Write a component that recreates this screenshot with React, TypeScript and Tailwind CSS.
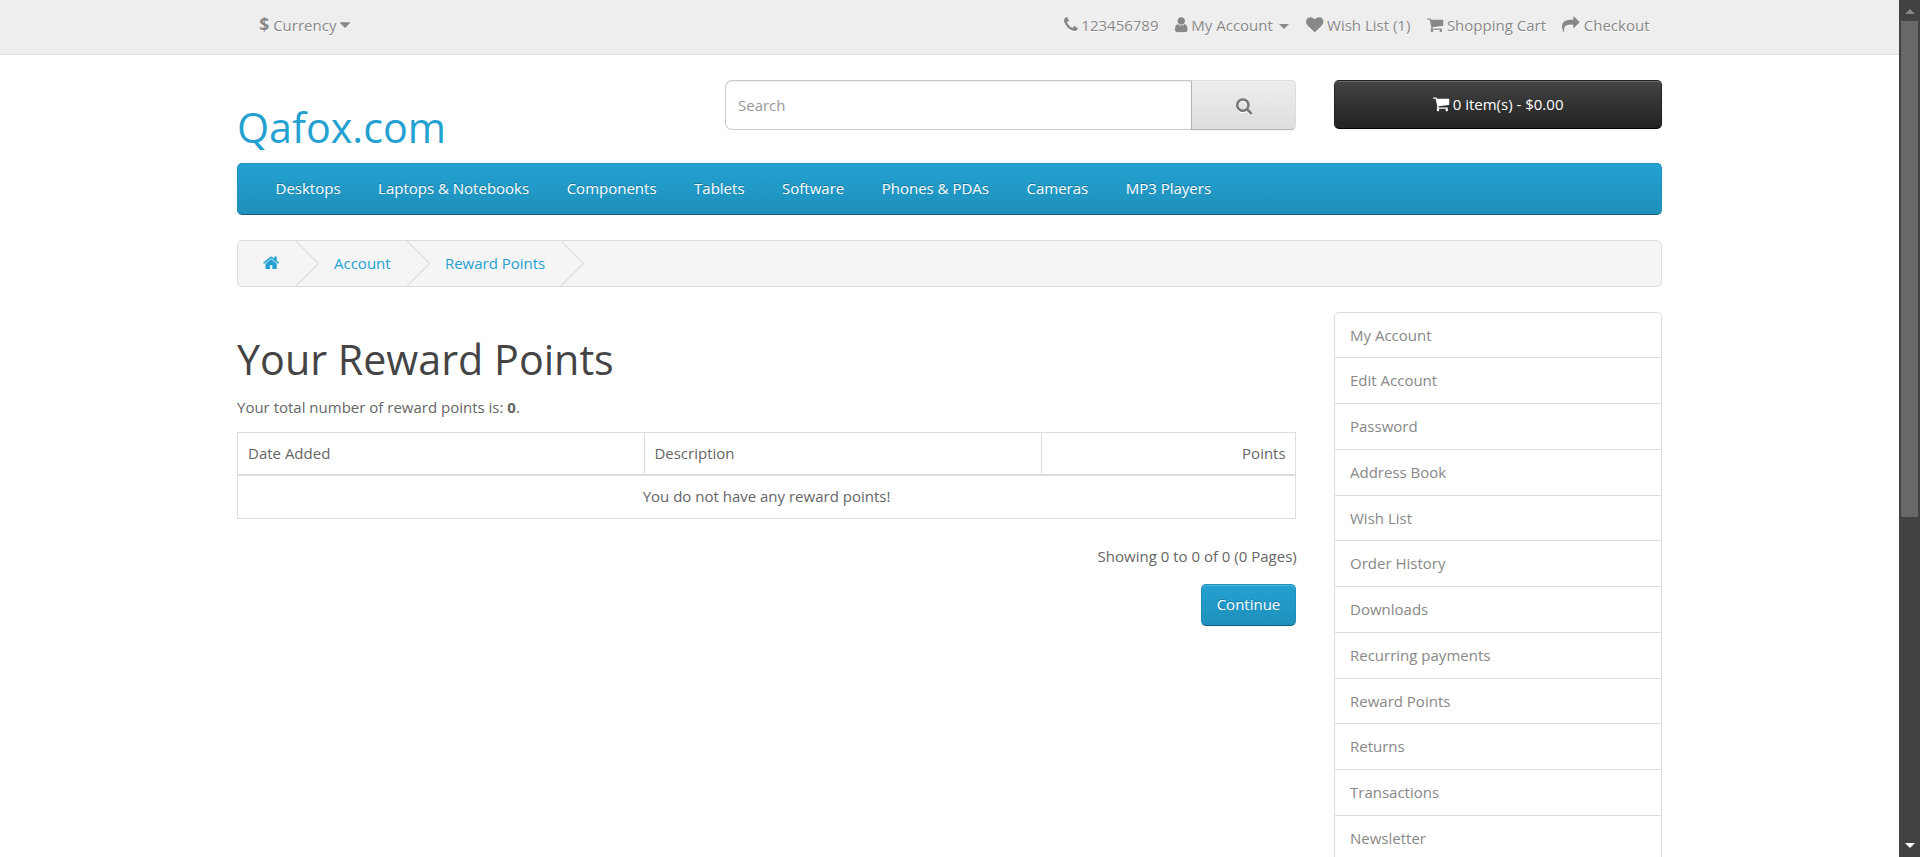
import type { ReactNode } from "react";

type IconShape = { x: number; w: number; d: string };

const ICONS = {
  phone: {
    x: 192,
    w: 1408,
    d: "M1600 1240q0 27-10 70.5t-21 68.5q-21 50-122 106-94 51-186 51-27 0-53-3.5t-57-12.5-47-14.5-55.5-20.5-49.5-18q-98-35-175-83-127-79-264-216t-216-264q-48-77-83-175-3-9-18-49.5t-20.5-55.5-14.5-47-12.5-57-3.5-53q0-92 51-186 56-101 106-122 25-11 68.5-21t70.5-10q14 0 21 3 18 6 53 76 11 19 30 54t35 63.5 31 53.5q3 4 17.5 25t21.5 35.5 7 28.5q0 20-28.5 50t-62 55-62 53-28.5 46q0 9 5 22.5t8.5 20.5 14 24 11.5 19q76 137 174 235t235 174q2 1 19 11.5t24 14 20.5 8.5 22.5 5q18 0 46-28.5t53-62 55-62 50-28.5q14 0 28.5 7t35.5 21.5 25 17.5q25 15 53.5 31t63.5 35 54 30q70 35 76 53 3 7 3 21z",
  },
  user: {
    x: 256,
    w: 1280,
    d: "M1536 1399q0 109-62.5 187t-150.5 78h-854q-88 0-150.5-78t-62.5-187q0-85 8.5-160.5t31.5-152 58.5-131 94-89 134.5-34.5q131 128 313 128t313-128q76 0 134.5 34.5t94 89 58.5 131 31.5 152 8.5 160.5zm-256-887q0 159-112.5 271.5t-271.5 112.5-271.5-112.5-112.5-271.5 112.5-271.5 271.5-112.5 271.5 112.5 112.5 271.5z",
  },
  heart: {
    x: 0,
    w: 1792,
    d: "M896 1664q-26 0-44-18l-624-602q-10-8-27.5-26t-55.5-65.5-68-97.5-53.5-121-23.5-138q0-220 127-344t351-124q62 0 126.5 21.5t120 58 95.5 68.5 76 68q36-36 76-68t95.5-68.5 120-58 126.5-21.5q224 0 351 124t127 344q0 221-229 450l-623 600q-18 18-44 18z",
  },
  cart: {
    x: 64,
    w: 1664,
    d: "M704 1536q0 52-38 90t-90 38-90-38-38-90 38-90 90-38 90 38 38 90zm896 0q0 52-38 90t-90 38-90-38-38-90 38-90 90-38 90 38 38 90zm128-1088v512q0 24-16.5 42.5t-40.5 21.5l-1044 122q13 60 13 70 0 16-24 64h920q26 0 45 19t19 45-19 45-45 19h-1024q-26 0-45-19t-19-45q0-11 8-31.5t16-36 21.5-40 15.5-29.5l-177-823h-204q-26 0-45-19t-19-45 19-45 45-19h256q16 0 28.5 6.5t19.5 15.5 13 24.5 8 26 5.5 29.5 4.5 26h1201q26 0 45 19t19 45z",
  },
  share: {
    x: 0,
    w: 1792,
    d: "M1792 640q0 26-19 45l-512 512q-19 19-45 19t-45-19-19-45v-256h-224q-98 0-175.5 6t-154 21.5-133 42.5-105.5 69.5-80 101-48.5 138.5-17.5 181q0 55 5 123 0 6 2.5 23.5t2.5 26.5q0 15-8.5 25t-23.5 10q-16 0-28-17-7-9-13-22t-13.5-30-10.5-24q-127-285-127-451 0-199 53-333 162-403 875-403h224v-256q0-26 19-45t45-19 45 19l512 512q19 19 19 45z",
  },
  home: {
    x: 64,
    w: 1664,
    d: "M1472 992v480q0 26-19 45t-45 19h-384v-384h-256v384h-384q-26 0-45-19t-19-45v-480q0-1 .5-3t.5-3l575-474 575 474q1 2 1 6zm223-69l-62 74q-8 9-21 11h-3q-13 0-21-7l-692-577-692 577q-12 8-24 7-13-2-21-11l-62-74q-8-10-7-23.5t11-21.5l719-599q32-26 76-26t76 26l244 204v-195q0-14 9-23t23-9h192q14 0 23 9t9 23v408l219 182q10 8 11 21.5t-7 23.5z",
  },
  search: {
    x: 64,
    w: 1664,
    d: "M1216 832q0-185-131.5-316.5t-316.5-131.5-316.5 131.5-131.5 316.5 131.5 316.5 316.5 131.5 316.5-131.5 131.5-316.5zm512 832q0 52-38 90t-90 38q-54 0-90-38l-343-342q-179 124-399 124-143 0-273.5-55.5t-225-150-150-225-55.5-273.5 55.5-273.5 150-225 225-150 273.5-55.5 273.5 55.5 225 150 150 225 55.5 273.5q0 220-124 399l343 343q37 37 37 90z",
  },
  caret: {
    x: 384,
    w: 1024,
    d: "M1408 704q0 26-19 45l-448 448q-19 19-45 19t-45-19l-448-448q-19-19-19-45t19-45 45-19h896q26 0 45 19t19 45z",
  },
} satisfies Record<string, IconShape>;

function Icon({ name, className = "" }: { name: keyof typeof ICONS; className?: string }) {
  const { x, w, d } = ICONS[name];
  return (
    <svg
      viewBox={`${x} 0 ${w} 1792`}
      className={`inline-block h-[17.5px] w-auto overflow-visible fill-current align-[-2.5px] ${className}`}
      aria-hidden="true"
    >
      <path d={d} />
    </svg>
  );
}

const MENU = [
  "Desktops",
  "Laptops & Notebooks",
  "Components",
  "Tablets",
  "Software",
  "Phones & PDAs",
  "Cameras",
  "MP3 Players",
];

const ACCOUNT_LINKS = [
  "My Account",
  "Edit Account",
  "Password",
  "Address Book",
  "Wish List",
  "Order History",
  "Downloads",
  "Recurring payments",
  "Reward Points",
  "Returns",
  "Transactions",
  "Newsletter",
];

const WHITE_SHADOW = "drop-shadow-[0_1px_0_#fff]";

function TopBar() {
  return (
    <nav className="h-[55px] border-b border-[#e2e2e2] bg-[#eeeeee] text-[#888888] [text-shadow:0_1px_0_#fff]">
      <div className="mx-auto flex w-[1425px] justify-between pt-[12.5px] pr-[12.5px] pl-[22.25px] whitespace-nowrap">
        <div>
          <strong className="text-[17.5px] leading-none font-bold">$</strong> Currency{" "}
          <Icon name="caret" className={WHITE_SHADOW} />
        </div>
        <ul className="flex gap-[16.4px]">
          <li>
            <Icon name="phone" className={WHITE_SHADOW} /> 123456789
          </li>
          <li>
            <Icon name="user" className={WHITE_SHADOW} /> My Account{" "}
            <span className="ml-[2.5px] inline-block border-x-[5px] border-t-[5px] border-x-transparent border-t-[#888888] align-middle" />
          </li>
          <li>
            <Icon name="heart" className={WHITE_SHADOW} /> Wish List (1)
          </li>
          <li>
            <Icon name="cart" className={WHITE_SHADOW} /> Shopping Cart
          </li>
          <li>
            <Icon name="share" className={WHITE_SHADOW} /> Checkout
          </li>
        </ul>
      </div>
    </nav>
  );
}

function Header() {
  return (
    <header className="mt-[25px] flex h-[83px] items-start">
      <div className="w-[488px] pt-[25px] text-[41.25px] leading-[45px] text-[#23a1d1]">Qafox.com</div>
      <div className="flex h-[50px] w-[571px]">
        <div className="flex flex-1 items-center rounded-l-[7px] border border-r-0 border-[#cccccc] bg-white pl-[12px] text-[#999999] shadow-[inset_0_1px_1px_rgba(0,0,0,0.075)]">
          Search
        </div>
        <button className="flex w-[105px] items-center justify-center rounded-r-[5px] border border-[#dddddd] border-b-[#b3b3b3] border-l-[#b3b3b3] bg-linear-to-b from-[#eeeeee] to-[#dddddd] pt-px pl-px text-[#777777] shadow-[0_1px_2px_rgba(0,0,0,0.05)]">
          <Icon name="search" className={WHITE_SHADOW} />
        </button>
      </div>
      <button className="ml-auto h-[49px] w-[328px] rounded-[5px] border border-[#222222] border-b-black bg-linear-to-b from-[#444444] to-[#222222] text-white shadow-[inset_0_1px_0_rgba(255,255,255,0.2),0_1px_2px_rgba(0,0,0,0.05)]">
        <Icon name="cart" /> 0 item(s) - $0.00
      </button>
    </header>
  );
}

function Menu() {
  return (
    <nav className="flex h-[52px] items-center rounded-[5px] border border-[#1f90bb] border-b-[#145e7a] bg-linear-to-b from-[#23a1d1] to-[#1f90bb] pb-[2px] pl-[18.75px] text-white [text-shadow:0_-1px_0_rgba(0,0,0,0.25)]">
      {MENU.map((item) => (
        <a key={item} className="px-[18.75px]">
          {item}
        </a>
      ))}
    </nav>
  );
}

function Crumb({ children }: { children: ReactNode }) {
  return (
    <li className="flex items-center">
      <span className="pr-[16px] pl-[15.25px]">{children}</span>
      <svg className="h-[45px] w-[23px]" viewBox="0 0 23 45" fill="none" stroke="#dddddd" strokeWidth="1.25" aria-hidden="true">
        <path d="M0 0L22.5 22.5L0 45" />
      </svg>
    </li>
  );
}

function Breadcrumb() {
  return (
    <ul className="mt-[25px] flex h-[47px] overflow-hidden rounded-[5px] border border-[#dddddd] bg-[#f5f5f5] pl-[9.5px] text-[#23a1d1]">
      <Crumb>
        <Icon name="home" className={`mr-[0.75px] ${WHITE_SHADOW}`} />
      </Crumb>
      <Crumb>Account</Crumb>
      <Crumb>Reward Points</Crumb>
    </ul>
  );
}

function Content() {
  return (
    <main className="w-[1059px]">
      <h1 className="mt-[25px] text-[41.25px] leading-[45px] text-[#444444]">Your Reward Points</h1>
      <p className="mt-[12.5px]">
        Your total number of reward points is: <b className="font-bold">0</b>.
      </p>
      <table className="mt-[12px] w-full table-fixed border-collapse border border-[#dddddd]">
        <colgroup>
          <col className="w-[407px]" />
          <col className="w-[397px]" />
          <col />
        </colgroup>
        <thead>
          <tr className="h-[43px]">
            <td className="border border-b-2 border-[#dddddd] px-[10px] text-left">Date Added</td>
            <td className="border border-b-2 border-[#dddddd] px-[9.4px] text-left">Description</td>
            <td className="border border-b-2 border-[#dddddd] px-[9.4px] text-right">Points</td>
          </tr>
        </thead>
        <tbody>
          <tr className="h-[43px]">
            <td colSpan={3} className="border border-[#dddddd] text-center">
              You do not have any reward points!
            </td>
          </tr>
        </tbody>
      </table>
      <div className="mt-[25px] -mr-[0.75px] text-right">Showing 0 to 0 of 0 (0 Pages)</div>
      <div className="mt-[15px] flex justify-end">
        <button className="h-[42px] w-[95px] rounded-[5px] border border-[#1f90bb] border-b-[#145e7a] bg-linear-to-b from-[#23a1d1] to-[#1f90bb] text-white shadow-[inset_0_1px_0_rgba(255,255,255,0.2),0_1px_2px_rgba(0,0,0,0.05)] [text-shadow:0_-1px_0_rgba(0,0,0,0.25)]">
          Continue
        </button>
      </div>
    </main>
  );
}

function Sidebar() {
  return (
    <aside className="-mt-[0.4px] w-[328px]">
      <ul className="rounded-t-[5px] border border-[#dddddd] text-[#888888]">
        {ACCOUNT_LINKS.map((link) => (
          <li key={link} className="flex h-[45.75px] items-center border-b border-[#dddddd] pt-[0.25px] pl-[15px]">
            {link}
          </li>
        ))}
      </ul>
    </aside>
  );
}

function Scrollbar() {
  return (
    <div className="flex h-full w-[21px] flex-col items-center bg-[#424242]">
      <div className="flex h-[21px] items-start pt-[9px]">
        <span className="border-x-[5px] border-b-[5px] border-x-transparent border-b-[#888888]" />
      </div>
      <div className="h-[496px] w-[17px] bg-[#686868]" />
      <div className="flex flex-1 items-end pb-[9px]">
        <span className="border-x-[5px] border-t-[5px] border-x-transparent border-t-white" />
      </div>
    </div>
  );
}

export default function App() {
  return (
    <div className="flex h-[857px] overflow-hidden bg-white font-['Open_Sans',sans-serif] text-[15px] leading-[25px] text-[#666666]">
      <div className="h-full flex-1 overflow-hidden">
        <TopBar />
        <div className="mx-auto w-[1425px]">
          <Header />
          <Menu />
          <Breadcrumb />
          <div className="mt-[25px] flex items-start justify-between">
            <Content />
            <Sidebar />
          </div>
        </div>
      </div>
      <Scrollbar />
    </div>
  );
}
